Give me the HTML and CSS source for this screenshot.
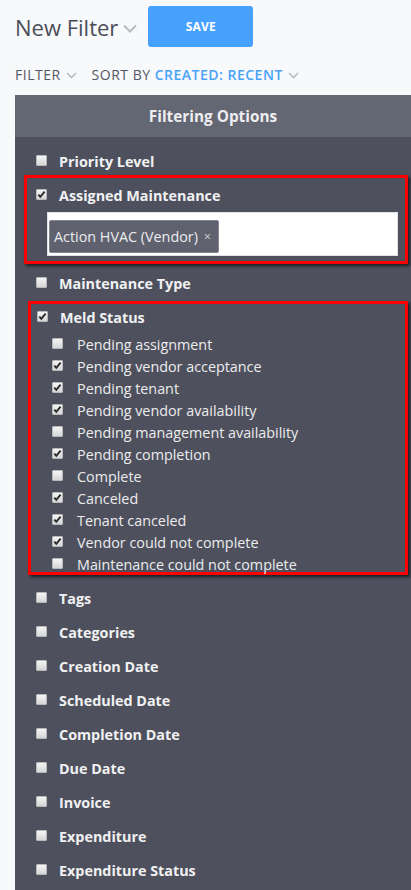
FILE: index.html
```html
<!DOCTYPE html>
<html>
<head>
<meta charset="utf-8">
<link rel="stylesheet" href="styles.css">
</head>
<body>
<div class="top">
  <div class="title">New Filter<svg class="chev-lg" width="14" height="9" viewBox="0 0 14 9"><path d="M1 1.5 L7 7.5 L13 1.5" fill="none" stroke="#b9bbc4" stroke-width="2"/></svg></div>
  <button class="save">SAVE</button>
</div>
<div class="bar">
  <span class="bar-item">FILTER<svg class="chev" width="11" height="7" viewBox="0 0 11 7"><path d="M1 1 L5.5 5.5 L10 1" fill="none" stroke="#b9bbc4" stroke-width="1.6"/></svg></span>
  <span class="bar-item sort">SORT BY <span class="blue">CREATED: RECENT</span><svg class="chev" width="11" height="7" viewBox="0 0 11 7"><path d="M1 1 L5.5 5.5 L10 1" fill="none" stroke="#b9bbc4" stroke-width="1.6"/></svg></span>
</div>
<div class="panel">
  <div class="panel-head">Filtering Options</div>
  <div class="panel-body">
    <div class="opt"><span class="cb"></span><span class="lbl">Priority Level</span></div>
    <div class="hl hl-1">
      <div class="opt"><span class="cb on"><svg width="11" height="11" viewBox="0 0 11 11"><path d="M2.3 5.6 L4.3 7.8 L8.6 2.6" fill="none" stroke="#2b2b2b" stroke-width="1.9"/></svg></span><span class="lbl">Assigned Maintenance</span></div>
      <div class="tags"><span class="tag">Action HVAC (Vendor)<span class="x">×</span></span></div>
    </div>
    <div class="opt opt-mt"><span class="cb"></span><span class="lbl">Maintenance Type</span></div>
    <div class="hl hl-2">
      <div class="opt"><span class="cb on"><svg width="11" height="11" viewBox="0 0 11 11"><path d="M2.3 5.6 L4.3 7.8 L8.6 2.6" fill="none" stroke="#2b2b2b" stroke-width="1.9"/></svg></span><span class="lbl">Meld Status</span></div>
      <div class="subs">
        <div class="sub"><span class="cb"></span><span>Pending assignment</span></div>
        <div class="sub"><span class="cb on"><svg width="11" height="11" viewBox="0 0 11 11"><path d="M2.3 5.6 L4.3 7.8 L8.6 2.6" fill="none" stroke="#2b2b2b" stroke-width="1.9"/></svg></span><span>Pending vendor acceptance</span></div>
        <div class="sub"><span class="cb on"><svg width="11" height="11" viewBox="0 0 11 11"><path d="M2.3 5.6 L4.3 7.8 L8.6 2.6" fill="none" stroke="#2b2b2b" stroke-width="1.9"/></svg></span><span>Pending tenant</span></div>
        <div class="sub"><span class="cb on"><svg width="11" height="11" viewBox="0 0 11 11"><path d="M2.3 5.6 L4.3 7.8 L8.6 2.6" fill="none" stroke="#2b2b2b" stroke-width="1.9"/></svg></span><span>Pending vendor availability</span></div>
        <div class="sub"><span class="cb"></span><span>Pending management availability</span></div>
        <div class="sub"><span class="cb on"><svg width="11" height="11" viewBox="0 0 11 11"><path d="M2.3 5.6 L4.3 7.8 L8.6 2.6" fill="none" stroke="#2b2b2b" stroke-width="1.9"/></svg></span><span>Pending completion</span></div>
        <div class="sub"><span class="cb"></span><span>Complete</span></div>
        <div class="sub"><span class="cb on"><svg width="11" height="11" viewBox="0 0 11 11"><path d="M2.3 5.6 L4.3 7.8 L8.6 2.6" fill="none" stroke="#2b2b2b" stroke-width="1.9"/></svg></span><span>Canceled</span></div>
        <div class="sub"><span class="cb on"><svg width="11" height="11" viewBox="0 0 11 11"><path d="M2.3 5.6 L4.3 7.8 L8.6 2.6" fill="none" stroke="#2b2b2b" stroke-width="1.9"/></svg></span><span>Tenant canceled</span></div>
        <div class="sub"><span class="cb on"><svg width="11" height="11" viewBox="0 0 11 11"><path d="M2.3 5.6 L4.3 7.8 L8.6 2.6" fill="none" stroke="#2b2b2b" stroke-width="1.9"/></svg></span><span>Vendor could not complete</span></div>
        <div class="sub"><span class="cb"></span><span>Maintenance could not complete</span></div>
      </div>
    </div>
    <div class="rest">
      <div class="opt"><span class="cb"></span><span class="lbl">Tags</span></div>
      <div class="opt"><span class="cb"></span><span class="lbl">Categories</span></div>
      <div class="opt"><span class="cb"></span><span class="lbl">Creation Date</span></div>
      <div class="opt"><span class="cb"></span><span class="lbl">Scheduled Date</span></div>
      <div class="opt"><span class="cb"></span><span class="lbl">Completion Date</span></div>
      <div class="opt"><span class="cb"></span><span class="lbl">Due Date</span></div>
      <div class="opt"><span class="cb"></span><span class="lbl">Invoice</span></div>
      <div class="opt"><span class="cb"></span><span class="lbl">Expenditure</span></div>
      <div class="opt"><span class="cb"></span><span class="lbl">Expenditure Status</span></div>
    </div>
  </div>
</div>
</body>
</html>
```
FILE: styles.css
```css
html, body {
  margin: 0;
  padding: 0;
}
body {
  background: #f8f9fb;
  font-family: "Open Sans", "Noto Sans", sans-serif;
  width: 411px;
  height: 890px;
  overflow: hidden;
}
.top {
  display: flex;
  align-items: center;
  padding: 6px 0 0 15px;
  height: 41px;
}
.title {
  display: flex;
  align-items: center;
  font-size: 22px;
  color: #4a4d58;
  line-height: 30px;
}
.chev-lg {
  margin-left: 5px;
  margin-top: 3px;
}
.save {
  margin-left: 11px;
  width: 105px;
  height: 41px;
  border: none;
  border-radius: 3px;
  background: #47a1ff;
  color: #fff;
  font-family: "Open Sans", sans-serif;
  font-weight: 700;
  font-size: 12px;
  letter-spacing: 0.2px;
  padding: 0;
}
.bar {
  display: flex;
  align-items: center;
  margin-top: 18px;
  padding-left: 15px;
  height: 20px;
  font-size: 14px;
  letter-spacing: 0.5px;
  color: #535764;
  line-height: 20px;
}
.bar-item {
  display: flex;
  align-items: center;
  white-space: pre;
}
.chev {
  margin-left: 5px;
  margin-top: 1px;
}
.sort {
  margin-left: 15px;
}
.blue {
  color: #4aa3f8;
  font-weight: 600;
}
.panel {
  margin: 10px 0 0 15px;
}
.panel-head {
  height: 42px;
  line-height: 42px;
  background: #636673;
  color: #eeeef0;
  font-weight: 700;
  font-size: 15.35px;
  text-align: center;
}
.panel-body {
  background: #4e515d;
  padding: 12px 0 40px 0;
}
.opt {
  display: flex;
  align-items: center;
  height: 24px;
  padding-left: 21px;
  color: #f1f1f3;
  font-size: 14.35px;
  font-weight: 700;
}
.lbl {
  margin-left: 12px;
}
.cb {
  flex: none;
  width: 11px;
  height: 11px;
  box-sizing: border-box;
  border: 1px solid #b9b9b9;
  border-radius: 1px;
  background: linear-gradient(#f4f4f4, #d6d6d6);
  margin-top: -2px;
}
.cb svg {
  display: block;
  margin: -1px 0 0 -1px;
}
.hl {
  border: 3px solid #ff0000;
  box-shadow: 2px 2px 3px rgba(0, 0, 0, 0.65);
  margin-right: 3px;
}
.hl-1 {
  margin-top: 2px;
  margin-left: 9px;
  padding: 5px 7px 5px 0;
}
.hl-1 .opt {
  padding-left: 9px;
}
.tags {
  margin: 5px 0 0 20px;
  height: 44px;
  box-sizing: border-box;
  background: #fff;
  border: 1px solid #e2e2e4;
  padding: 7px 0 0 1px;
}
.tag {
  display: inline-flex;
  align-items: center;
  height: 33px;
  box-sizing: border-box;
  background: #5f626e;
  border: 1px solid #83868f;
  border-radius: 2px;
  padding: 0 7px 0 4px;
  color: #ececee;
  font-size: 14.35px;
}
.x {
  margin-left: 6px;
  font-size: 12px;
  color: #d8d8dc;
}
.opt-mt {
  margin-top: 7px;
}
.hl-2 {
  margin-top: 6px;
  margin-left: 13px;
  padding: 1px 0 0 0;
}
.hl-2 .opt {
  padding-left: 6px;
}
.subs {
  margin-top: 4px;
  margin-bottom: -3px;
}
.sub {
  display: flex;
  align-items: center;
  height: 22px;
  padding-left: 21px;
  color: #ececee;
  font-size: 14.35px;
}
.sub .cb + span {
  margin-left: 14px;
}
.rest {
  margin-top: 11px;
  display: flex;
  flex-direction: column;
  gap: 10px;
}
```
